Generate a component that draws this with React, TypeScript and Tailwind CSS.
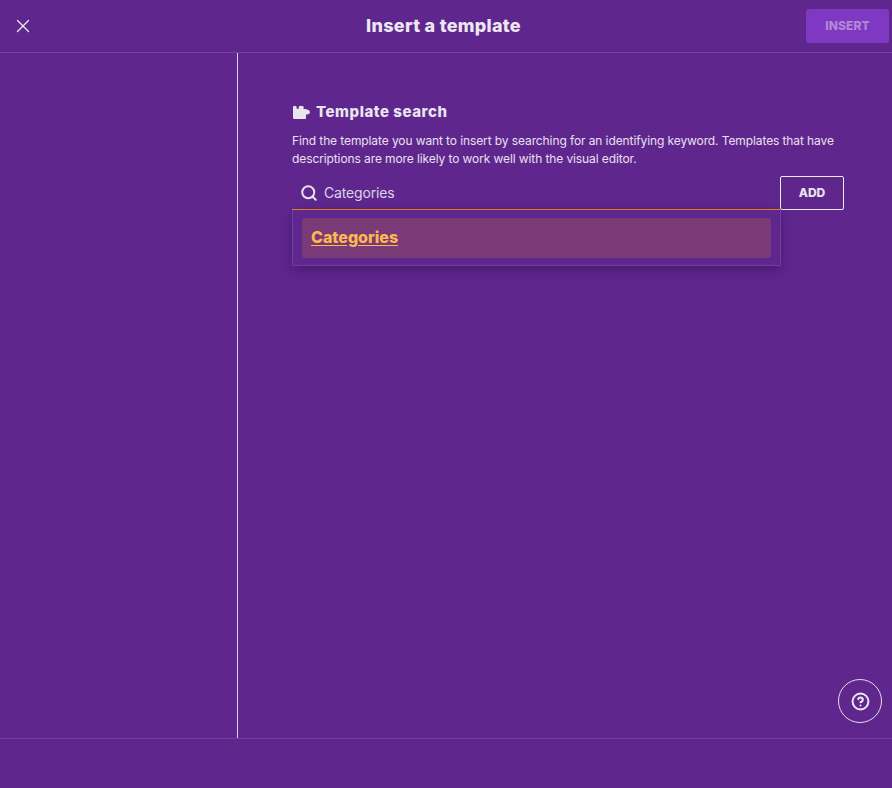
import { CircleHelp, Search, X } from "lucide-react";

function PuzzleIcon() {
  return (
    <svg width="17" height="13" viewBox="0 0 17 13" fill="currentColor" className="mt-[1px] ml-[1px] shrink-0">
      <path d="M0 1.2C0 .5 .5 0 1.2 0H2.5C3.2 0 3.6 .6 3.6 1.4V2.8H5.8V1.2C5.8 .5 6.3 0 7 0H9.5C10.2 0 10.6 .5 10.6 1.2V3H12.5L14 3.6C15 3.8 17 4.8 17 6.2C17 7.6 15 8.4 13 8.6V12C13 12.6 12.6 13 12 13H1.2C.5 13 0 12.5 0 11.8Z" />
    </svg>
  );
}

export default function App() {
  return (
    <div className="relative flex h-[788px] w-[892px] flex-col overflow-hidden bg-[#5f278e] font-['Inter',sans-serif] text-[#e8e4ee]">
      {/* Header */}
      <header className="flex h-[53px] shrink-0 items-center border-b border-[#71419c] pl-[15px] pr-[3px]">
        <button className="flex h-4 w-4 items-center justify-center text-[#f0ecf4]">
          <X size={22} strokeWidth={1.4} className="shrink-0" />
        </button>
        <h1 className="flex-1 pl-[50px] text-center text-[18px] leading-6 font-extrabold tracking-[0.3px] text-[#ece7f2]">
          Insert a template
        </h1>
        <button className="h-[34px] w-[83px] rounded-[3px] bg-[#7e38c2] text-[12px] font-extrabold tracking-[0.1px] text-[#b288d6]">
          INSERT
        </button>
      </header>

      {/* Body */}
      <div className="flex flex-1">
        <aside className="w-[238px] shrink-0 border-r border-[#dcd2e6]" />
        <main className="flex-1 pt-[50px] pr-[48px] pl-[54px]">
          <div className="flex h-[18px] items-center gap-[6px] text-[#e9e5ef]">
            <PuzzleIcon />
            <h2 className="text-[15px] leading-[18px] font-extrabold tracking-[0.55px]">Template search</h2>
          </div>
          <p className="mt-[11px] text-[12px] leading-[18px] tracking-[-0.1px] text-[#e8e0ef]">
            Find the template you want to insert by searching for an identifying keyword. Templates that have
            descriptions are more likely to work well with the visual editor.
          </p>
          <div className="relative mt-[8px] flex h-[34px]">
            <div className="flex flex-1 items-center gap-[6px] border-b border-[#e8930c] pl-[8px]">
              <Search size={18} strokeWidth={2.6} className="text-[#e8e4ee]" />
              <span className="text-[14px] tracking-[-0.15px] text-[#ddd5e6]">Categories</span>
            </div>
            <button className="w-[64px] rounded-[2px] border border-[#eeeaf2] text-[12px] font-extrabold text-[#e8e4ee]">
              ADD
            </button>
            {/* Dropdown */}
            <div className="absolute top-[34px] left-0 h-[56px] w-[489px] rounded-b-[2px] border-x border-b border-[#6f3f9b] bg-[#5f278e] px-[9px] pt-[8px] shadow-[0_4px_12px_rgba(40,10,70,0.45)]">
              <div className="flex h-[40px] items-center rounded-[3px] bg-[#7a3a78] px-[9px] pb-[2px]">
                <a className="text-[16px] font-extrabold text-[#fdb850] underline underline-offset-2">Categories</a>
              </div>
            </div>
          </div>
        </main>
      </div>

      {/* Footer */}
      <footer className="h-[50px] shrink-0 border-t border-[#71419c]" />

      <button className="absolute top-[679px] left-[838px] flex h-[44px] w-[44px] items-center justify-center rounded-full border border-[#e3dcea] text-[#ece8f1]">
        <CircleHelp size={19} strokeWidth={2.5} />
      </button>
    </div>
  );
}
